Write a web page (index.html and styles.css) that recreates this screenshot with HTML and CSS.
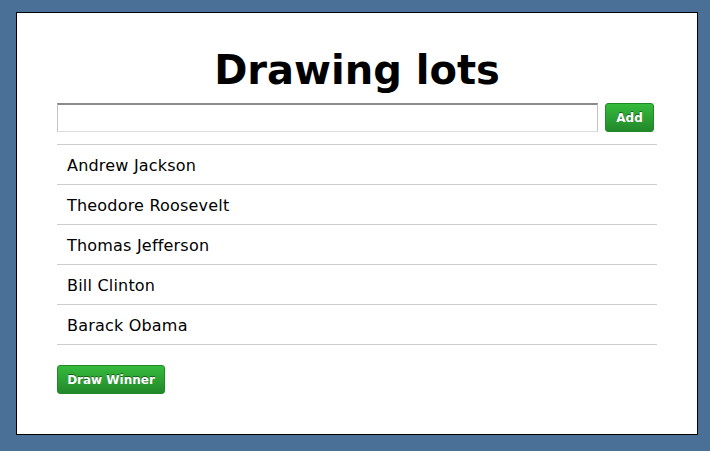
FILE: index.html
```html
<!DOCTYPE html>
<html>
<head>
<meta charset="utf-8">
<link rel="stylesheet" href="styles.css">
</head>
<body>
<div class="panel">
  <h1 class="title">Drawing lots</h1>
  <div class="entry">
    <input class="name-input" type="text">
    <button class="btn btn-add">Add</button>
  </div>
  <ul class="names">
    <li class="name">Andrew Jackson</li>
    <li class="name">Theodore Roosevelt</li>
    <li class="name">Thomas Jefferson</li>
    <li class="name">Bill Clinton</li>
    <li class="name">Barack Obama</li>
  </ul>
  <button class="btn btn-draw">Draw Winner</button>
</div>
</body>
</html>
```
FILE: styles.css
```css
html, body {
  margin: 0;
  height: 100%;
}
body {
  background: #4a7097;
  padding: 12px 12px 0 16px;
  box-sizing: border-box;
  font-family: "DejaVu Sans", Verdana, sans-serif;
}
.panel {
  background: #fff;
  border: 1px solid #000;
  width: 682px;
  height: 423px;
  box-sizing: border-box;
  padding: 0 40px;
}
.title {
  margin: 0;
  padding-top: 31px;
  height: 59px;
  font-size: 40px;
  line-height: 52px;
  font-weight: bold;
  text-align: center;
  color: #000;
}
.entry {
  display: flex;
  gap: 7px;
  padding-right: 3px;
}
.name-input {
  flex: 1;
  height: 29px;
  box-sizing: border-box;
  margin: 0;
  border: 1px solid #c4c4c4;
  border-top: 2px solid #8a8a8a;
  border-bottom-color: #dcdcdc;
}
.btn {
  height: 29px;
  box-sizing: border-box;
  margin: 0;
  border: 1px solid #1f8a25;
  border-radius: 3px;
  background: linear-gradient(#35bb3c, #22882a);
  color: #fff;
  font-family: "DejaVu Sans", Verdana, sans-serif;
  font-weight: bold;
  font-size: 12px;
  text-shadow: 0 -1px 0 #1a5c1e;
  padding: 0;
}
.btn-add {
  width: 49px;
}
.names {
  list-style: none;
  margin: 12px 0 0;
  padding: 0;
  border-top: 1px solid #cccccc;
}
.name {
  height: 40px;
  box-sizing: border-box;
  border-bottom: 1px solid #cccccc;
  padding: 2px 0 0 10px;
  font-size: 16px;
  letter-spacing: 0.2px;
  line-height: 37px;
  color: #000;
}
.btn-draw {
  margin-top: 20px;
  width: 108px;
}
```
